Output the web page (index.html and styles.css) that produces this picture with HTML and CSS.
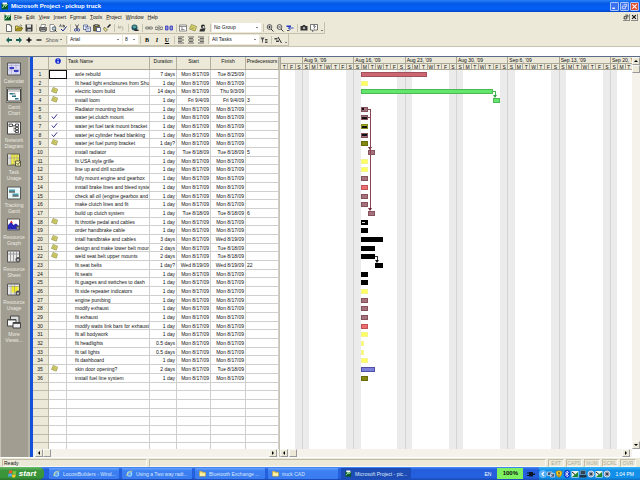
FILE: index.html
```html
<!DOCTYPE html>
<html lang="en">
<head>
<meta charset="utf-8">
<title>Microsoft Project - pickup truck</title>
<link rel="stylesheet" href="styles.css">
</head>
<body>
<svg width="0" height="0" class="defs" aria-hidden="true">
  <defs>
    <symbol id="i-proj" viewBox="0 0 16 16"><rect x="1" y="3" width="13" height="12" fill="#0a5a2a"/><path d="M3 1h9v4H3z" fill="#fff"/><path d="M3 12l4-7 2 4 4-5" stroke="#b8f0b0" stroke-width="2" fill="none"/></symbol>
    <symbol id="i-new" viewBox="0 0 16 16"><path d="M3 1h7l3 3v11H3z" fill="#fff" stroke="#333" stroke-width="1.4"/><path d="M10 1v3h3" fill="none" stroke="#333"/></symbol>
    <symbol id="i-open" viewBox="0 0 16 16"><path d="M1 14V4h5l1 2h6v3" fill="#f0dc60" stroke="#5a5010" stroke-width="1.4"/><path d="M1 14l3-6h12l-4 6z" fill="#a89820" stroke="#5a5010"/><path d="M9 3q3-3 5 1" fill="none" stroke="#222"/></symbol>
    <symbol id="i-save" viewBox="0 0 16 16"><path d="M1 1h14v14H1z" fill="#3c3c38"/><path d="M4 1h8v6H4z" fill="#ddd"/><path d="M5 10h7v5H5z" fill="#aaa"/></symbol>
    <symbol id="i-print" viewBox="0 0 16 16"><path d="M5 1h8l-2 6H3z" fill="#fff" stroke="#333"/><path d="M1 7h14v6H1z" fill="#777" stroke="#222"/><path d="M3 12h10v3H3z" fill="#ddd" stroke="#222"/></symbol>
    <symbol id="i-preview" viewBox="0 0 16 16"><path d="M2 1h7l3 3v11H2z" fill="#fff" stroke="#333"/><circle cx="10" cy="9" r="3.5" fill="#b8d8e8" stroke="#222" stroke-width="1.3"/><path d="M12 12l3 3" stroke="#222" stroke-width="2"/></symbol>
    <symbol id="i-spell" viewBox="0 0 16 16"><path d="M1 6l2-5 2 5M8 1v5h3V3H8" fill="none" stroke="#223" stroke-width="1.2"/><path d="M4 10l4 4 7-9" fill="none" stroke="#1a2a90" stroke-width="2"/></symbol>
    <symbol id="i-cut" viewBox="0 0 16 16"><path d="M5 1l5 9M11 1L6 10" stroke="#223" stroke-width="1.5"/><circle cx="5" cy="12" r="2.3" fill="none" stroke="#1a2a90" stroke-width="1.5"/><circle cx="11" cy="12" r="2.3" fill="none" stroke="#1a2a90" stroke-width="1.5"/></symbol>
    <symbol id="i-copy" viewBox="0 0 16 16"><path d="M1 2h8v9H1z" fill="#fff" stroke="#223a80" stroke-width="1.3"/><path d="M6 6h9v9H6z" fill="#fff" stroke="#223a80" stroke-width="1.3"/><path d="M8 9h5M8 12h5M3 5h4" stroke="#223a80"/></symbol>
    <symbol id="i-paste" viewBox="0 0 16 16"><path d="M1 2h12v12H1z" fill="#77703c" stroke="#222"/><path d="M4 1h6v3H4z" fill="#ddd" stroke="#222"/><path d="M7 7h8v8H7z" fill="#fff" stroke="#223a80" stroke-width="1.3"/></symbol>
    <symbol id="i-brush" viewBox="0 0 16 16"><path d="M15 1l-6 6" stroke="#222" stroke-width="3"/><path d="M3 6l6 6-4 3-4-5z" fill="#e8e080" stroke="#333"/></symbol>
    <symbol id="i-undo" viewBox="0 0 16 16"><path d="M3 3v5h5M3 8q5-6 9-1 1 3-2 6" fill="none" stroke="#aaa798" stroke-width="1.6"/></symbol>
    <symbol id="i-globe" viewBox="0 0 16 16"><circle cx="7" cy="7" r="6" fill="#205868"/><path d="M3 5q4-4 8 0-2 5-6 3z" fill="#58a8a0"/><path d="M7 11h8v3H7z" fill="#222"/></symbol>
    <symbol id="i-link" viewBox="0 0 16 16"><rect x="1" y="6" width="7" height="4" rx="2" fill="none" stroke="#555" stroke-width="1.6"/><rect x="8" y="6" width="7" height="4" rx="2" fill="none" stroke="#555" stroke-width="1.6"/></symbol>
    <symbol id="i-unlink" viewBox="0 0 16 16"><rect x="0" y="6" width="6" height="5" rx="2" fill="none" stroke="#555" stroke-width="1.6"/><rect x="10" y="6" width="6" height="5" rx="2" fill="none" stroke="#555" stroke-width="1.6"/><path d="M6 2l4 12M10 2L6 14" stroke="#777"/></symbol>
    <symbol id="i-split" viewBox="0 0 16 16"><path d="M1 4h5v8H1zM10 4h5v8h-5z" fill="#8890e0" stroke="#2a2ab0" stroke-width="1.4"/><path d="M6 8h4" stroke="#2a2ab0" stroke-dasharray="1 1"/></symbol>
    <symbol id="i-info" viewBox="0 0 16 16"><path d="M1 2h14v12H1z" fill="#fff" stroke="#555" stroke-width="1.3"/><path d="M1 5h14M4 8h4M4 11h7" stroke="#555" stroke-width="1.3"/></symbol>
    <symbol id="i-note" viewBox="0 0 16 16"><path d="M5 1l10 4-3 9-11-4z" fill="#e4e078" stroke="#77752a" stroke-width="1.3"/><path d="M5 5l7 3M4 8l6 2" stroke="#77752a"/></symbol>
    <symbol id="i-assign" viewBox="0 0 16 16"><circle cx="8" cy="5" r="4" fill="#222"/><circle cx="9" cy="6" r="2" fill="#eee"/><path d="M1 15q0-7 7-6l5-1-2 7z" fill="#333"/></symbol>
    <symbol id="i-zin" viewBox="0 0 16 16"><circle cx="7" cy="6" r="4.7" fill="#fff" stroke="#222" stroke-width="1.5"/><path d="M4.500 6h5M7 3.500v5M10 10l5 5" stroke="#222" stroke-width="1.8"/></symbol>
    <symbol id="i-zout" viewBox="0 0 16 16"><circle cx="7" cy="6" r="4.700" fill="#fff" stroke="#222" stroke-width="1.5"/><path d="M4.500 6h5M10 10l5 5" stroke="#222" stroke-width="1.800"/></symbol>
    <symbol id="i-goto" viewBox="0 0 16 16"><path d="M1 3h9v3H1z" fill="#2038c0"/><path d="M5 8h10M5 8l4-3M5 8l4 4" stroke="#2038c0" stroke-width="1.800"/><path d="M2 12h5v2H2z" fill="#555"/></symbol>
    <symbol id="i-camera" viewBox="0 0 16 16"><path d="M1 4h4l1-2h4l1 2h4v9H1z" fill="#333"/><circle cx="8" cy="8" r="3" fill="#ccc" stroke="#111"/></symbol>
    <symbol id="i-help" viewBox="0 0 16 16"><path d="M1 1h14v11H9l-4 3v-3H1z" fill="#fff" stroke="#333" stroke-width="1.300"/><path d="M6 5q2-3 4-1t-2 4M8 9v2" fill="none" stroke="#222" stroke-width="1.500"/></symbol>
    <symbol id="i-left" viewBox="0 0 16 16"><path d="M2 8l6-6v4h6v4H8v4z" fill="#186058"/></symbol>
    <symbol id="i-right" viewBox="0 0 16 16"><path d="M14 8L8 2v4H2v4h6v4z" fill="#186058"/></symbol>
    <symbol id="i-plus" viewBox="0 0 16 16"><path d="M8 3v10M3 8h10" stroke="#111" stroke-width="3"/></symbol>
    <symbol id="i-minus" viewBox="0 0 16 16"><path d="M3 8h10" stroke="#111" stroke-width="2.500"/></symbol>
    <symbol id="i-al" viewBox="0 0 16 16"><path d="M2 2h12M2 5h8M2 8h12M2 11h8M2 14h12" stroke="#333" stroke-width="1.400"/></symbol>
    <symbol id="i-ac" viewBox="0 0 16 16"><path d="M2 2h12M4 5h8M2 8h12M4 11h8M2 14h12" stroke="#333" stroke-width="1.400"/></symbol>
    <symbol id="i-ar" viewBox="0 0 16 16"><path d="M2 2h12M6 5h8M2 8h12M6 11h8M2 14h12" stroke="#333" stroke-width="1.400"/></symbol>
    <symbol id="i-filter" viewBox="0 0 16 16"><path d="M1 3h8L6 8v5H4V8z" fill="#555"/><path d="M10 7h5M10 10h5M10 13h5" stroke="#222" stroke-width="1.600"/></symbol>
    <symbol id="i-wizard" viewBox="0 0 16 16"><path d="M1 4h6v3H1zM4 9h6v3H4z" fill="#444"/><path d="M8 2l7 12" stroke="#222" stroke-width="2"/></symbol>
    <symbol id="i-check" viewBox="0 0 16 16"><path d="M2 8l4 5 8-10" fill="none" stroke="#1c1c80" stroke-width="2"/></symbol>
    <symbol id="i-ind" viewBox="0 0 16 16"><circle cx="8" cy="8" r="7.500" fill="#1028d0"/><path d="M8 3v2M8 7v6" stroke="#fff" stroke-width="3"/></symbol>

    <symbol id="v-cal" viewBox="0 0 28 26"><path d="M1 1h26v24H1z" fill="#dcdcf4" stroke="#555" stroke-width="2"/><path d="M1 6h26M9 1v24M18 1v24M1 15h26" stroke="#9a9ac0"/><path d="M5 9h9v4H5zM14 15h9v4h-9z" fill="#3a3ac0"/></symbol>
    <symbol id="v-gantt" viewBox="0 0 28 26"><path d="M1 1h26v24H1z" fill="#fff" stroke="#444" stroke-width="2"/><path d="M2 5h24" stroke="#999" stroke-width="2"/><path d="M5 9h8v3H5zM10 14h8v3h-8zM16 19h7v3h-7z" fill="#2a7890"/><path d="M13 10h3v4" fill="none" stroke="#333"/></symbol>
    <symbol id="v-net" viewBox="0 0 28 26"><path d="M1 1h26v24H1z" fill="#fff" stroke="#444" stroke-width="2"/><path d="M4 5h7v5H4zM17 5h6v5h-6zM17 12h6v4h-6zM17 18h6v4h-6z" fill="#eee" stroke="#222" stroke-width="1.500"/><path d="M11 8h6M14 8v12h3M14 14h3" stroke="#222" fill="none"/></symbol>
    <symbol id="v-tuse" viewBox="0 0 28 26"><path d="M1 1h24v22H1z" fill="#f0ec50" stroke="#555" stroke-width="2"/><path d="M2 2h6v20H2z" fill="#ddd"/><path d="M8 2v20M14 2v20M20 2v20M2 9h22" stroke="#888"/><path d="M17 15h10v10H17z" fill="#f8f4a0" stroke="#333" stroke-width="1.500"/><path d="M19 19l3 3 4-5" fill="none" stroke="#222" stroke-width="1.500"/></symbol>
    <symbol id="v-track" viewBox="0 0 28 26"><path d="M1 1h26v24H1z" fill="#e8f8f8" stroke="#555" stroke-width="2"/><path d="M4 6h12v4H4zM11 14h12v4H11z" fill="#48a0b0"/><path d="M4 11h12M11 19h12" stroke="#222" stroke-width="2"/></symbol>
    <symbol id="v-rgraph" viewBox="0 0 28 26"><path d="M1 1h24v22H1z" fill="#fff" stroke="#555" stroke-width="2"/><path d="M2 22V13l6-6 5 6 5-3 6 5v7z" fill="#2828b8"/><path d="M6 8l3-4 3 6z" fill="#d03030"/><circle cx="22" cy="18" r="4" fill="#555"/><circle cx="22" cy="19" r="1.500" fill="#ddd"/></symbol>
    <symbol id="v-rsheet" viewBox="0 0 28 26"><path d="M1 1h24v22H1z" fill="#e8e8e8" stroke="#555" stroke-width="2"/><path d="M7 2v20M13 2v20M19 2v20M2 7h22" stroke="#888" stroke-width="1.500"/><circle cx="22" cy="18" r="5" fill="#555"/><circle cx="22" cy="19" r="2" fill="#ddd"/></symbol>
    <symbol id="v-ruse" viewBox="0 0 28 26"><path d="M1 1h24v22H1z" fill="#e8e8e8" stroke="#555" stroke-width="2"/><path d="M9 5h14v13H9z" fill="#f4ec30"/><path d="M8 2v20M15 2v20M2 6h22" stroke="#888"/><circle cx="22" cy="19" r="5" fill="#555"/><circle cx="22" cy="20" r="2" fill="#ddd"/></symbol>
    <symbol id="v-more" viewBox="0 0 28 26"><path d="M7 1h17v13H7z" fill="#ddd" stroke="#444" stroke-width="2"/><path d="M1 8h17v13H1z" fill="#fff" stroke="#444" stroke-width="2"/><path d="M12 14h15v11H12z" fill="#eee" stroke="#444" stroke-width="2"/><path d="M1 9h17M12 16h15" stroke="#555" stroke-width="2"/></symbol>

    <symbol id="i-win" viewBox="0 0 16 16"><path d="M2 3q3-2 6 0L7 8Q4 6 1 8z" fill="#f05a28"/><path d="M9 3q3 2 6 0l-1 5q-3 2-6 0z" fill="#7cc83c"/><path d="M1 9q3-2 6 0l-1 5q-3-2-6 0z" fill="#58a8f8"/><path d="M8 9q3 2 6 0l-1 5q-3 2-6 0z" fill="#f8cc30"/></symbol>
    <symbol id="i-ie" viewBox="0 0 16 16"><circle cx="8" cy="9" r="5" fill="none" stroke="#9ad8ff" stroke-width="2.500"/><path d="M4 9h9" stroke="#9ad8ff" stroke-width="2"/><path d="M1 14Q4 3 15 2" fill="none" stroke="#f4d850" stroke-width="1.500"/></symbol>
    <symbol id="i-folder" viewBox="0 0 16 16"><path d="M1 3h6l1 2h7v9H1z" fill="#f8e070" stroke="#b89020"/><path d="M2 8h12v5H2z" fill="#fff4b0"/></symbol>
    <symbol id="i-plug" viewBox="0 0 16 16"><path d="M4 4h8v9H4zM12 7h4v3h-4zM0 5h4v2H0zM0 10h4v2H0z" fill="#101828"/></symbol>
    <symbol id="i-mon" viewBox="0 0 16 16"><path d="M1 4h9v7H1zM7 7h8v7H7z" fill="#3a5078" stroke="#cde" stroke-width="1.500"/></symbol>
    <symbol id="i-shield" viewBox="0 0 16 16"><path d="M8 1l6 2q1 8-6 12Q1 11 2 3z" fill="#f8c820" stroke="#987010"/><path d="M8 4v5M8 11v2" stroke="#333" stroke-width="2"/></symbol>
    <symbol id="i-bt" viewBox="0 0 16 16"><ellipse cx="8" cy="8" rx="6" ry="8" fill="#1038d0"/><path d="M4 5l7 6-3 3V2l3 3-7 6" fill="none" stroke="#fff" stroke-width="1.500"/></symbol>
    <symbol id="i-sig" viewBox="0 0 16 16"><path d="M1 2h14v13H1z" fill="#e8f4e8"/><path d="M2 14L14 4v10z" fill="#208830"/><path d="M2 4l6 5" stroke="#222" stroke-width="2"/></symbol>
    <symbol id="i-pc" viewBox="0 0 16 16"><path d="M3 1h10v8H3z" fill="#345" stroke="#8ab"/><path d="M1 10h14v5H1z" fill="#223344"/></symbol>
    <symbol id="i-spk" viewBox="0 0 16 16"><circle cx="8" cy="8" r="6" fill="#8898a8" stroke="#dde" stroke-width="2"/><circle cx="8" cy="8" r="2" fill="#223"/></symbol>
  </defs>
</svg>

<div class="app">
  <header class="titlebar">
    <svg class="ico"><use href="#i-proj"/></svg>
    <h1>Microsoft Project - pickup truck</h1>
    <div class="winbtns">
      <button class="wb" aria-label="Minimize"><svg viewBox="0 0 16 16"><path d="M3 12h6" stroke="#fff" stroke-width="3"/></svg></button>
      <button class="wb" aria-label="Restore"><svg viewBox="0 0 16 16"><path d="M6 3h7v6M3 7h7v6H3z" fill="none" stroke="#fff" stroke-width="1.600"/></svg></button>
      <button class="wb close" aria-label="Close"><svg viewBox="0 0 16 16"><path d="M3 3l10 10M13 3L3 13" stroke="#fff" stroke-width="2.400"/></svg></button>
    </div>
  </header>

  <nav class="menubar">
    <svg class="ico"><use href="#i-proj"/></svg>
    <button><u>F</u>ile</button><button><u>E</u>dit</button><button><u>V</u>iew</button><button><u>I</u>nsert</button><button>F<u>o</u>rmat</button><button><u>T</u>ools</button><button><u>P</u>roject</button><button><u>W</u>indow</button><button><u>H</u>elp</button>
    <div class="docbtns">
      <button aria-label="Restore document"><svg viewBox="0 0 16 16"><path d="M6 3h7v6M3 7h7v6H3z" fill="none" stroke="#111" stroke-width="2"/></svg></button>
      <button aria-label="Close document"><svg viewBox="0 0 16 16"><path d="M3 3l10 10M13 3L3 13" stroke="#111" stroke-width="3"/></svg></button>
    </div>
  </nav>

  <div class="toolrow">
    <div class="toolbar">
      <button class="tb" aria-label="New"><svg><use href="#i-new"/></svg></button>
      <button class="tb" aria-label="Open"><svg><use href="#i-open"/></svg></button>
      <button class="tb" aria-label="Save"><svg><use href="#i-save"/></svg></button>
      <i class="sep"></i>
      <button class="tb" aria-label="Print"><svg><use href="#i-print"/></svg></button>
      <button class="tb" aria-label="Print Preview"><svg><use href="#i-preview"/></svg></button>
      <button class="tb" aria-label="Spelling"><svg><use href="#i-spell"/></svg></button>
      <i class="sep"></i>
      <button class="tb" aria-label="Cut"><svg><use href="#i-cut"/></svg></button>
      <button class="tb" aria-label="Copy"><svg><use href="#i-copy"/></svg></button>
      <button class="tb" aria-label="Paste"><svg><use href="#i-paste"/></svg></button>
      <button class="tb" aria-label="Format Painter"><svg><use href="#i-brush"/></svg></button>
      <i class="sep"></i>
      <button class="tb" aria-label="Undo"><svg><use href="#i-undo"/></svg></button>
      <i class="sep"></i>
      <button class="tb" aria-label="Insert Hyperlink"><svg><use href="#i-globe"/></svg></button>
      <i class="sep"></i>
      <button class="tb" aria-label="Link Tasks"><svg><use href="#i-link"/></svg></button>
      <button class="tb" aria-label="Unlink Tasks"><svg><use href="#i-unlink"/></svg></button>
      <button class="tb" aria-label="Split Task"><svg><use href="#i-split"/></svg></button>
      <i class="sep"></i>
      <button class="tb" aria-label="Task Information"><svg><use href="#i-info"/></svg></button>
      <button class="tb" aria-label="Task Notes"><svg><use href="#i-note"/></svg></button>
      <button class="tb" aria-label="Assign Resources"><svg><use href="#i-assign"/></svg></button>
      <i class="sep"></i>
      <span class="combo group"><select aria-label="Group by"><option>No Group</option></select></span>
      <i class="sep"></i>
      <button class="tb" aria-label="Zoom In"><svg><use href="#i-zin"/></svg></button>
      <button class="tb" aria-label="Zoom Out"><svg><use href="#i-zout"/></svg></button>
      <button class="tb" aria-label="Go To Selected Task"><svg><use href="#i-goto"/></svg></button>
      <i class="sep"></i>
      <button class="tb" aria-label="Copy Picture"><svg><use href="#i-camera"/></svg></button>
      <button class="tb" aria-label="Help"><svg><use href="#i-help"/></svg></button>
      <button class="more" aria-label="More standard buttons"></button>
    </div>
  </div>
  <div class="toolrow">
    <div class="toolbar">
      <button class="tb" aria-label="Outdent"><svg><use href="#i-left"/></svg></button>
      <button class="tb" aria-label="Indent"><svg><use href="#i-right"/></svg></button>
      <button class="tb" aria-label="Show Subtasks"><svg><use href="#i-plus"/></svg></button>
      <button class="tb" aria-label="Hide Subtasks"><svg><use href="#i-minus"/></svg></button>
      <button class="show"><span><u>S</u>how</span></button>
      <i class="sep"></i>
      <span class="combo font"><select aria-label="Font"><option>Arial</option></select></span>
      <span class="combo size"><select aria-label="Font size"><option>8</option></select></span>
      <i class="sep"></i>
      <button class="tb b">B</button>
      <button class="tb b it">I</button>
      <button class="tb b un">U</button>
      <i class="sep"></i>
      <button class="tb" aria-label="Align Left"><svg><use href="#i-al"/></svg></button>
      <button class="tb" aria-label="Center"><svg><use href="#i-ac"/></svg></button>
      <button class="tb" aria-label="Align Right"><svg><use href="#i-ar"/></svg></button>
      <i class="sep"></i>
      <span class="combo group"><select aria-label="Filter"><option>All Tasks</option></select></span>
      <button class="tb" aria-label="AutoFilter"><svg><use href="#i-filter"/></svg></button>
      <i class="sep"></i>
      <button class="tb" aria-label="Gantt Chart Wizard"><svg><use href="#i-wizard"/></svg></button>
      <button class="more" aria-label="More formatting buttons"></button>
    </div>
  </div>

  <div class="entrybar"><input type="text" aria-label="Entry bar"></div>

  <main class="work">
    <nav class="viewbar">
      <div class="views">
        <button><svg><use href="#v-cal"/></svg><span>Calendar</span></button>
        <button class="on"><svg><use href="#v-gantt"/></svg><span>Gantt<br>Chart</span></button>
        <button><svg><use href="#v-net"/></svg><span>Network<br>Diagram</span></button>
        <button><svg><use href="#v-tuse"/></svg><span>Task<br>Usage</span></button>
        <button><svg><use href="#v-track"/></svg><span>Tracking<br>Gantt</span></button>
        <button><svg><use href="#v-rgraph"/></svg><span>Resource<br>Graph</span></button>
        <button><svg><use href="#v-rsheet"/></svg><span>Resource<br>Sheet</span></button>
        <button><svg><use href="#v-ruse"/></svg><span>Resource<br>Usage</span></button>
        <button><svg><use href="#v-more"/></svg><span>More<br>Views...</span></button>
      </div>
    </nav>

    <section class="sheet">
      <div class="clip">
        <table>
          <thead><tr><th></th><th aria-label="Indicators"><svg><use href="#i-ind"/></svg></th><th class="name">Task Name</th><th>Duration</th><th>Start</th><th>Finish</th><th>Predecessors</th></tr></thead>
          <tbody id="rows"></tbody>
        </table>
      </div>
      <div class="hscroll"><button class="arr l" aria-label="Scroll sheet left"></button><i class="thumb"></i><button class="arr r" aria-label="Scroll sheet right"></button></div>
    </section>

    <section class="gantt">
      <div class="chart">
        <div class="scale" id="scale"></div>
        <div class="clip"><div class="bars" id="bars"></div></div>
      </div>
      <div class="vscroll"><button class="arr u" aria-label="Scroll up"></button><i class="thumb"></i><button class="arr d" aria-label="Scroll down"></button></div>
      <div class="hscroll"><button class="arr l" aria-label="Scroll chart left"></button><i class="thumb"></i><button class="arr r" aria-label="Scroll chart right"></button></div>
    </section>
  </main>

  <div class="status">
    <span class="msg">Ready</span><span class="mid"></span>
    <span class="key">EXT</span><span class="key">CAPS</span><span class="key">NUM</span><span class="key">SCRL</span><span class="key">OVR</span>
  </div>

  <footer class="taskbar">
    <button class="start"><svg><use href="#i-win"/></svg>start</button>
    <button class="task"><svg><use href="#i-ie"/></svg>LocostBuilders - Wind...</button>
    <button class="task"><svg><use href="#i-ie"/></svg>Using a Two way radi...</button>
    <button class="task"><svg><use href="#i-folder"/></svg>Bluetooth Exchange ...</button>
    <button class="task"><svg><use href="#i-folder"/></svg>truck CAD</button>
    <button class="task active"><svg><use href="#i-proj"/></svg>Microsoft Project - pic...</button>
    <span class="lang">EN</span>
    <span class="batt">100%</span>
    <svg class="plug"><use href="#i-plug"/></svg>
    <div class="tray">
      <button class="chev" aria-label="Hide inactive icons"><svg viewBox="0 0 16 16"><circle cx="8" cy="8" r="7" fill="#48a8f8" stroke="#a8dcff"/><path d="M10 4L6 8l4 4" fill="none" stroke="#fff" stroke-width="2.500"/></svg></button>
      <svg><use href="#i-mon"/></svg><svg><use href="#i-shield"/></svg><svg><use href="#i-bt"/></svg><svg><use href="#i-sig"/></svg><svg><use href="#i-pc"/></svg><svg><use href="#i-spk"/></svg><svg><use href="#i-sig"/></svg><svg><use href="#i-spk"/></svg>
      <span class="clock">1:04 PM</span>
    </div>
  </footer>
</div>
<script src="app.js"></script>
</body>
</html>
```

FILE: styles.css
```css
* { box-sizing: border-box; }
html, body { height: 100%; margin: 0; }
body { font: 5px/6px "Liberation Sans", Arial, sans-serif; color: #111; background: #ece9d8; overflow: hidden; }
button, select, input { font: inherit; color: inherit; border: 0; padding: 0; margin: 0; background: none; }
button { display: flex; align-items: center; justify-content: center; white-space: nowrap; }
svg { display: block; flex: none; }
.defs { position: absolute; }
.app { height: 100vh; display: flex; flex-direction: column; }

.titlebar { height: 12px; flex: none; display: flex; align-items: center; padding: 0 1px; gap: 2px; color: #fff;
  background: linear-gradient(#2a80f4, #0458e6 30%, #0460f8 75%, #0446c4); }
.ico { width: 8px; height: 8px; }
.titlebar h1 { margin: 0; font-size: 6px; line-height: 8px; font-weight: bold; flex: 1; }
.winbtns { display: flex; gap: 1px; }
.wb { width: 9px; height: 9px; background: #3c70ec; border: 1px solid #a8c4fc; border-radius: 1px; }
.wb svg { width: 7px; height: 7px; }
.wb.close { background: #e05030; }

.menubar { height: 10px; flex: none; display: flex; align-items: center; gap: 4px; padding: 0 2px 0 4px; }
.menubar u, .show u { text-underline-offset: 0; text-decoration-thickness: 1px; text-decoration-color: #999; }
.menubar .ico { margin-right: -2px; }
.docbtns { display: flex; gap: 1px; margin-left: auto; }
.docbtns button { width: 7px; height: 7px; border-right: 1px solid #888; border-bottom: 1px solid #888; }
.docbtns svg { width: 6px; height: 6px; }

.toolrow { height: 12px; flex: none; display: flex; }
.toolbar { display: flex; align-items: center; padding-left: 4px; border: solid #c4c0ac; border-width: 0 1px 1px 0; }
.tb { width: 10px; height: 10px; }
.tb svg { width: 8px; height: 8px; }
.sep { width: 1px; height: 8px; background: #c8c4b2; margin: 0 1px 0 2px; }
.combo { position: relative; height: 9px; background: #fff; }
.combo::after { content: ""; position: absolute; right: 3px; top: 4px; border: 1px solid transparent; border-top-color: #111; border-bottom: 0; pointer-events: none; }
.combo select { appearance: none; display: block; width: 100%; height: 9px; padding: 0 2px; line-height: 9px; }
.group { width: 49px; }
.font { width: 54px; }
.size { width: 15px; margin-left: 1px; }
.show { width: 20px; height: 10px; color: #555; gap: 2px; }
.show::after { content: ""; border: 1px solid transparent; border-top-color: #111; border-bottom: 0; }
.b { font: bold 6px/8px "Liberation Serif", serif; color: #000; }
.it { font-style: italic; }
.un { text-decoration: underline; }
.more { width: 5px; height: 10px; align-items: flex-end; }
.more::after { content: ""; border: 1px solid transparent; border-top-color: #111; border-bottom: 0; margin-bottom: 2px; }

.entrybar { height: 11px; flex: none; display: flex; padding-left: 67px; border-bottom: 1px solid #5a6a88; border-top: 1px solid #c8c4b2; }
.entrybar input { flex: 1; background: #fff; min-width: 0; }

.work { flex: 1; min-height: 0; display: flex; background: #fff; }
.viewbar { width: 33px; flex: none; background: #a19d90; border-right: 3px solid #1450d8; border-left: 1px solid #c8c4b8; box-shadow: inset -2px 0 #b8b4a6; }
.views { height: 286px; padding: 5px 3px 0 0; display: flex; flex-direction: column; justify-content: space-between; align-items: center; }
.views button { flex-direction: column; gap: 2px; color: #eceae2; }
.views svg { width: 14px; height: 14px; }
.on svg { outline: 1px solid #77746a; background: #d8d4c8; }

.sheet { width: 246px; flex: none; display: flex; flex-direction: column; }
.clip { flex: 1; min-height: 0; overflow: hidden; }
table { display: flex; flex-direction: column; height: 100%; border-top: 0; }
tr { display: grid; grid-template-columns: 16px 18px 83px 27px 34px 35px 1fr; min-height: 0; }
thead { display: block; flex: none; }
thead tr { height: 13px; background: #ece9d8; border-bottom: 1px solid #aaa798; }
th { font-weight: normal; padding: 1px 0 0; border-right: 1px solid #b4b0a0; text-align: center; white-space: nowrap; }
th.name { text-align: left; padding-left: 1px; }
th svg { width: 6px; height: 6px; margin: 0 auto; }
tbody { display: grid; grid-auto-rows: minmax(0, 1fr); flex: none; height: calc(100% - 10px); }
td { padding: 0 1px 0 0; border: solid #cfcfcf; border-width: 0 1px 1px 0; text-align: right; line-height: 8px; white-space: nowrap; overflow: hidden; }
td:first-child { background: #ece9d8; text-align: center; border-color: #bdb9a8; }
td:nth-child(3) { text-align: left; padding: 0 0 0 8px; }
td:nth-child(7) { text-align: left; padding-left: 1px; }
td svg { width: 7px; height: 7px; margin-left: 2px; }
.sel { outline: 1px solid #111; outline-offset: -1px; }

.hscroll { height: 8px; flex: none; display: flex; background: #f4f2ea; padding: 0 2px; }
.arr { width: 8px; height: 8px; flex: none; background: #ece9d8; border: 1px solid; border-color: #f8f8f4 #999 #999 #f8f8f4; }
.arr::after { content: ""; border: 2px solid transparent; }
.l::after { border-right-color: #000; border-left: 0; }
.r::after { border-left-color: #000; border-right: 0; }
.u::after { border-bottom-color: #000; border-top: 0; }
.d::after { border-top-color: #000; border-bottom: 0; }
.thumb { width: 8px; height: 8px; background: #ece9d8; border: 1px solid; border-color: #f8f8f4 #999 #999 #f8f8f4; }
.r, .d { margin-left: auto; }

.gantt { flex: 1; min-width: 0; display: grid; grid-template: minmax(0, 1fr) 8px / minmax(0, 1fr) 8px; border-left: 1px solid #c8c4b2; }
.chart { display: flex; flex-direction: column; min-height: 0; }
.scale { height: 13px; flex: none; display: grid; grid-template: 7px 6px / repeat(48, minmax(0, 1fr)); background: #ece9d8; border-bottom: 1px solid #aaa798; }
.scale span { border-left: 1px solid #aaa798; white-space: nowrap; overflow: hidden; text-align: center; }
.scale .week { text-align: left; padding-left: 1px; border-bottom: 1px solid #aaa798; }
.bars { height: calc(100% + 3px); display: grid; grid-template: repeat(44, minmax(0, 1fr)) / repeat(48, minmax(0, 1fr)); }
.weekend { background: #ebebeb; }
.sun { border-left: 1px solid #d4d4d4; }
.bar { height: 5px; margin-top: 2px; border: 1px solid rgba(0, 0, 0, .2); display: flex; align-items: center; }
.bar i { height: 2px; background: #111; }
.red { background: #cc6670; }
.rose { background: #ee6c70; }
.green { background: #62e66c; }
.yellow { background: #ffff60; border-color: #f4f490; }
.mauve { background: #a8727c; border-color: #84525c; }
.lime { background: #a8b020; }
.olive { background: #858810; }
.blue { background: #7c80d8; border-color: #5050a8; }
.black { background: #000; }
.black i { background: #ddd; height: 1px; }
.link { position: relative; width: 3px; margin-top: 4px; border: solid #8c4450; border-width: 1px 1px 0 0; }
.link::after { content: ""; position: absolute; right: -2px; bottom: -2px; border: 2px solid transparent; border-top: 3px solid #702030; border-bottom: 0; }
.link.g { border-color: #40b850; }
.link.g::after { border-top-color: #30a040; }
.link.k { border-color: #333; }
.link.k::after { border-top-color: #111; }
.vscroll { background: #f4f2ea; display: flex; flex-direction: column; }
.vscroll .d { margin: auto 0 0; }
.gantt .hscroll { padding-left: 0; gap: 1px; }

.status { height: 10px; flex: none; display: flex; align-items: center; gap: 2px; padding: 1px 4px 1px 2px; border-top: 1px solid #fff; }
.status span { height: 8px; line-height: 7px; border: 1px solid; border-color: #c0bca8 #f8f8f4 #f8f8f4 #c0bca8; padding: 0 1px; }
.msg { width: 145px; }
.mid { flex: 1; }
.status .key { width: 16px; padding: 0; color: #aeaa9a; text-align: center; line-height: 6px; }

.taskbar { height: 13px; flex: none; display: flex; align-items: center; gap: 3px; color: #fff;
  background: linear-gradient(#4a8cf4, #245edc 20%, #2460e0 80%, #1a48b0); }
.start { width: 44px; height: 13px; margin-right: 2px; gap: 2px; font: italic bold 8px/10px "Liberation Sans", Arial, sans-serif;
  background: linear-gradient(#6cbc6c, #3c963c 25%, #389438 80%, #2a702a); border-radius: 0 5px 5px 0; }
.start svg { width: 9px; height: 9px; }
.task { width: 70px; height: 11px; flex: 0 1 auto; justify-content: flex-start; gap: 3px; padding-left: 4px; border-radius: 1px; background: linear-gradient(#6aa4fa, #3c80f2 25%, #3a7cf0); color: #dce8fc; overflow: hidden; }
.task svg { width: 7px; height: 7px; }
.task.active { background: #1c4cb4; }
.lang { margin-left: auto; }
.batt { width: 26px; height: 11px; margin-left: 3px; background: #7cf060; color: #111; font: bold 6px/11px "Liberation Sans", Arial, sans-serif; text-align: center; }
.plug { width: 8px; height: 8px; margin: 0 1px; }
.tray { height: 13px; display: flex; align-items: center; padding-right: 6px; background: linear-gradient(#38b4f8, #1290e8 25%, #1290ea 80%, #0c70c0); }
.tray svg { width: 8px; height: 8px; }
.clock { margin-left: 4px; }
```

FILE: app.js
```js
// indicator, name, duration, start, finish, predecessors, first day column, days, colour, progress %
const tasks = [
  ["", "axle rebuild", "7 days", "Mon 8/17/09", "Tue 8/25/09", "", 12, 9, "red"],
  ["", "fit head light enclosures from Shu", "1 day", "Mon 8/17/09", "Mon 8/17/09", "", 12, 1, "yellow"],
  ["note", "electric loom build", "14 days", "Mon 8/17/09", "Thu 9/3/09", "", 12, 18, "green"],
  ["note", "install loom", "1 day", "Fri 9/4/09", "Fri 9/4/09", "3", 30, 1, "green"],
  ["", "Radiator mounting bracket", "1 day", "Mon 8/17/09", "Mon 8/17/09", "", 12, 1, "mauve", 50],
  ["check", "water jet clutch mount", "1 day", "Mon 8/17/09", "Mon 8/17/09", "", 12, 1, "mauve", 100],
  ["check", "water jet fuel tank mount bracket", "1 day", "Mon 8/17/09", "Mon 8/17/09", "", 12, 1, "lime", 100],
  ["check", "water jet cylinder head blanking", "1 day", "Mon 8/17/09", "Mon 8/17/09", "", 12, 1, "mauve", 100],
  ["note", "water jet fuel pump bracket", "1 day?", "Mon 8/17/09", "Mon 8/17/09", "", 12, 1, "olive"],
  ["", "install radiator", "1 day", "Tue 8/18/09", "Tue 8/18/09", "5", 13, 1, "mauve"],
  ["", "fit USA style grille", "1 day", "Mon 8/17/09", "Mon 8/17/09", "", 12, 1, "yellow"],
  ["", "line up and drill scuttle", "1 day", "Mon 8/17/09", "Mon 8/17/09", "", 12, 1, "yellow"],
  ["", "fully mount engine and gearbox", "1 day", "Mon 8/17/09", "Mon 8/17/09", "", 12, 1, "mauve"],
  ["", "install brake lines and bleed syste", "1 day", "Mon 8/17/09", "Mon 8/17/09", "", 12, 1, "rose"],
  ["", "check all oil (engine gearbox and", "1 day", "Mon 8/17/09", "Mon 8/17/09", "", 12, 1, "mauve"],
  ["", "make clutch lines and fit", "1 day", "Mon 8/17/09", "Mon 8/17/09", "", 12, 1, "mauve"],
  ["", "build up clutch system", "1 day", "Tue 8/18/09", "Tue 8/18/09", "6", 13, 1, "mauve"],
  ["note", "fit throttle pedal and cables", "1 day", "Mon 8/17/09", "Mon 8/17/09", "", 12, 1, "black", 70],
  ["", "order handbrake cable", "1 day", "Mon 8/17/09", "Mon 8/17/09", "", 12, 1, "black"],
  ["note", "intall handbrake and cables", "3 days", "Mon 8/17/09", "Wed 8/19/09", "", 12, 3, "black"],
  ["note", "design and make lower belt mount", "2 days", "Mon 8/17/09", "Tue 8/18/09", "", 12, 2, "black"],
  ["note", "weld seat belt upper mounts", "2 days", "Mon 8/17/09", "Tue 8/18/09", "", 12, 2, "black"],
  ["", "fit seat belts", "1 day?", "Wed 8/19/09", "Wed 8/19/09", "22", 14, 1, "black"],
  ["", "fit seats", "1 day", "Mon 8/17/09", "Mon 8/17/09", "", 12, 1, "black"],
  ["", "fit guages and switches to dash", "1 day", "Mon 8/17/09", "Mon 8/17/09", "", 12, 1, "black"],
  ["", "fit side repeater indicators", "1 day", "Mon 8/17/09", "Mon 8/17/09", "", 12, 1, "yellow"],
  ["", "engine pumbing", "1 day", "Mon 8/17/09", "Mon 8/17/09", "", 12, 1, "mauve"],
  ["", "modify exhaust", "1 day", "Mon 8/17/09", "Mon 8/17/09", "", 12, 1, "mauve"],
  ["", "fit exhaust", "1 day", "Mon 8/17/09", "Mon 8/17/09", "", 12, 1, "mauve"],
  ["", "modify watts link bars for exhaust", "1 day", "Mon 8/17/09", "Mon 8/17/09", "", 12, 1, "rose"],
  ["", "fit all bodywork", "1 day", "Mon 8/17/09", "Mon 8/17/09", "", 12, 1, "yellow"],
  ["", "fit headlights", "0.5 days", "Mon 8/17/09", "Mon 8/17/09", "", 12, 0.5, "yellow"],
  ["", "fit tail lights", "0.5 days", "Mon 8/17/09", "Mon 8/17/09", "", 12, 0.5, "yellow"],
  ["", "fit dashboard", "1 day", "Mon 8/17/09", "Mon 8/17/09", "", 12, 1, "yellow"],
  ["note", "skin door opening?", "2 days", "Mon 8/17/09", "Tue 8/18/09", "", 12, 2, "blue"],
  ["", "install fuel line system", "1 day", "Mon 8/17/09", "Mon 8/17/09", "", 12, 1, "olive"]
];
const ROWS = 44, DAYS = 48;

let rows = "", bars = "", scale = "";
for (let r = 0; r < ROWS; r++) {
  const t = tasks[r];
  if (!t) { rows += "<tr>" + "<td></td>".repeat(7) + "</tr>"; continue; }
  const ind = t[0] ? `<svg><use href="#i-${t[0]}"/></svg>` : "";
  rows += `<tr><td>${r + 1}</td><td${r === 0 ? ' class="sel"' : ""}>${ind}</td>` +
    t.slice(1, 6).map(c => `<td>${c}</td>`).join("") + "</tr>";
}

// column 1 is Thursday, August 6
const weeks = ["", "Aug 9, '09", "Aug 16, '09", "Aug 23, '09", "Aug 30, '09", "Sep 6, '09", "Sep 13, '09", "Sep 20, '0"];
weeks.forEach((w, i) => {
  const start = i ? 4 + (i - 1) * 7 : 1, end = Math.min(4 + i * 7, DAYS + 1);
  scale += `<span class="week" style="grid-area:1/${start}/2/${end}">${w}</span>`;
});
for (let d = 1; d <= DAYS; d++) {
  const day = (d + 3) % 7;
  scale += `<span style="grid-area:2/${d}">${"SMTWTFS"[day]}</span>`;
  if (day === 0 || day === 6) bars += `<div class="weekend${day === 0 ? " sun" : ""}" style="grid-area:1/${d}/${ROWS + 1}/${d + 1}"></div>`;
}

tasks.forEach((t, r) => {
  const [col, days, colour, done] = t.slice(6);
  const width = days < 1 ? `;width:${days * 100}%` : "";
  const fill = done ? `<i style="width:${done}%"></i>` : "";
  bars += `<div class="bar ${colour}" style="grid-area:${r + 1}/${col}/${r + 2}/${col + Math.ceil(days)}${width}">${fill}</div>`;
});
// from row, to row, column, colour
[[3, 4, 30, "g"], [5, 10, 13, ""], [6, 17, 13, ""], [22, 23, 14, "k"]].forEach(([a, b, col, c]) => {
  bars += `<div class="link ${c}" style="grid-area:${a}/${col}/${b}/${col + 1}"></div>`;
});

document.getElementById("rows").innerHTML = rows;
document.getElementById("bars").innerHTML = bars;
document.getElementById("scale").innerHTML = scale;
```
